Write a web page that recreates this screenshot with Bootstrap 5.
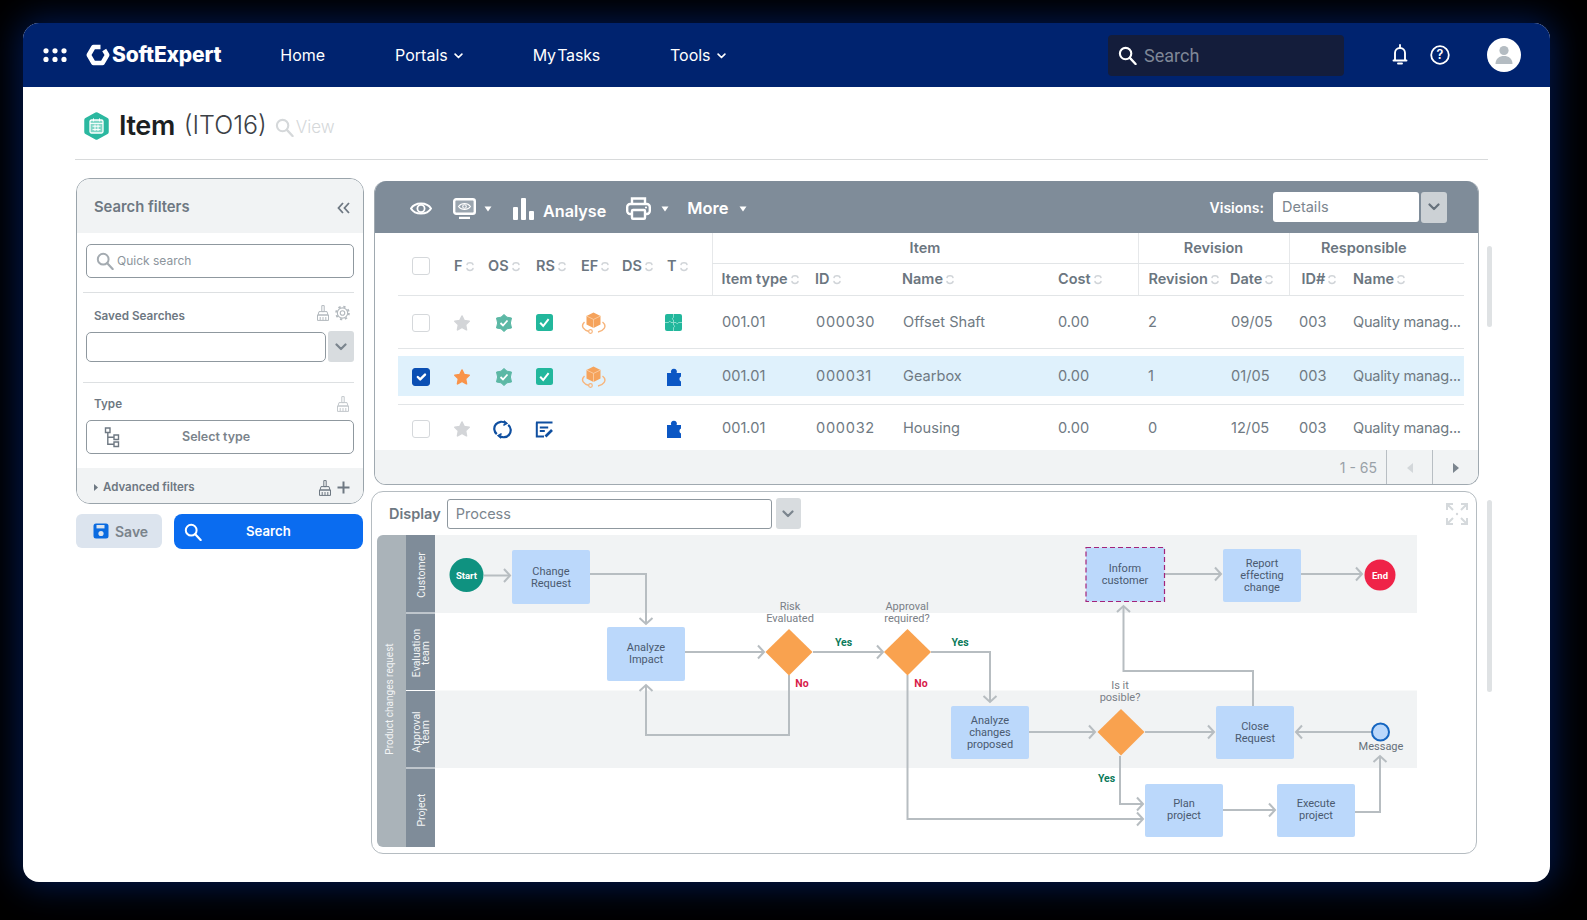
<!DOCTYPE html>
<html lang="en">
  <head>
    <meta charset="UTF-8" />
    <meta name="viewport" content="width=device-width, initial-scale=1.0" />
    <title>SoftExpert Item</title>
    <link href="https://cdn.jsdelivr.net/npm/bootstrap@5.3.0/dist/css/bootstrap.min.css" rel="stylesheet" />
    <style>
      html, body { height: 100%; }
      body { background: #000; font-family: "Inter", "Liberation Sans", sans-serif; color: #6e7882; overflow: hidden; }
      .app-window { width: 1527px; height: 859px; margin: 23px 0 0 23px; border-radius: 16px; background: #fff; overflow: hidden; box-shadow: 0 0 34px 4px #00184f; }

      /* top bar */
      .top-bar { height: 64px; background: #00236f; padding: 0 29px 0 20px; color: #fff; }
      .brand-wrap { margin-left: 19px; }
      .brand-name { font-size: 21px; font-weight: 800; letter-spacing: -.2px; color: #fff; margin-left: 2px; }
      .top-links { gap: 70px; margin-left: 59px; font-size: 16px; }
      .top-links a { color: #fff; text-decoration: none; }
      .tight-words { word-spacing: -3px; letter-spacing: -.2px; }
      .nav-chev { margin-left: 6px; vertical-align: 2px; }
      .top-search { width: 236px; height: 41px; background: #141d3b; border-radius: 4px; padding-left: 10px; gap: 7px; color: #7f8797; font-size: 18px; font-family: "Roboto", sans-serif; margin-right: 48px; }
      .help-ic { margin-left: 22px; }
      .avatar { width: 34px; height: 34px; border-radius: 50%; background: #fff; margin-left: 37px; }

      /* page */
      .page-body { padding: 0 62px 0 52px; }
      .title-row { height: 73px; border-bottom: 1px solid #d8dadb; padding: 6px 0 0 9px; }
      .title-row h1 { font-size: 27px; font-weight: 600; color: #1c1f22; margin: 0 0 0 10px; letter-spacing: -.4px; }
      .title-code { font-size: 25px; font-weight: 300; color: #3c4146; margin-left: 9px; }
      .title-view-ic { color: #d5d8da; margin: 3px 0 0 8px; }
      .title-view { font-size: 17px; color: #d5d8da; margin: 4px 0 0 2px; font-weight: 300; }
      .content-row { margin-top: 18px; }

      /* search filters */
      .filter-col { width: 288px; margin-left: 1px; margin-right: 7px; }
      .filter-panel { height: 326px; border: 1px solid #9aa4ab; border-radius: 14px; overflow: hidden; background: #fff; }
      .filter-head { height: 54px; background: #f1f3f4; padding: 3px 13px 0 17px; font-size: 14.8px; font-weight: 600; }
      .filter-body { padding: 11px 9px 0; height: 235px; }
      .box-field { height: 34px; border: 1px solid #8f989f; border-radius: 5px; color: #8c959c; font-size: 12px; padding: 0 0 0 9px; }
      .quick-field { gap: 3px; }
      .filter-sep { border-top: 1px solid #dde0e2; margin-left: -3px; }
      .quick-sep { margin-top: 14px; }
      .filter-label { font-size: 11.7px; font-weight: 600; padding: 0 4px 0 8px; }
      .saved-head { height: 38px; padding-top: 12px; }
      .saved-head > span:first-child { margin-top: 3px; }
      .broom-pale { color: #b3b9be; gap: 5px; }
      .saved-field { height: 30px; width: 240px; }
      .chev-btn { width: 26px; height: 31px; background: #d8dcdf; border-radius: 3px; color: #7b858e; }
      .saved-row { gap: 2px; margin-bottom: 20px; }
      .type-head { height: 37px; padding-top: 13px; }
      .broom-paler { color: #c3c8cc; }
      .type-field { font-weight: 600; color: #7a838b; font-size: 12.5px; padding-left: 17px; }
      .type-field span { margin-left: 62px; }
      .filter-foot { height: 35px; background: #f1f3f4; padding: 4px 13px 0 17px; font-size: 11.5px; font-weight: 600; }
      .adv-text { margin-left: 5px; }
      .adv-plus { margin-left: 5px; }
      .broom-dark { color: #6e7882; }
      .filter-actions { margin-top: 10px; gap: 12px; }
      .save-btn { width: 86px; height: 34px; background: #dce4ee; border-radius: 6px; padding: 0 0 0 17px; gap: 6px; font-size: 14px; font-weight: 600; color: #7a838b; }
      .run-btn { width: 189px; height: 35px; background: #0a6cf0; border-radius: 8px; padding: 0 0 0 10px; font-size: 13.2px; font-weight: 600; color: #fff; }
      .run-btn span { margin-left: 44px; }

      /* results panel */
      .main-col { width: 1121px; }
      .result-panel { width: 1106px; height: 304px; margin: 3px 0 0 3px; border: 1px solid #a0a9b0; border-top: 0; border-radius: 12px; overflow: hidden; background: #fff; }
      .tool-strip { height: 52px; background: #7f8c99; margin: 0 -1px; padding: 3px 32px 0 0; color: #fff; }
      .tb-eye { margin-left: 36px; }
      .tb-monitor { margin-left: 21px; }
      .tb-caret { margin-left: 8px; color: #fff; }
      .tb-bars { margin-left: 21px; }
      .tb-analyse { margin: 6px 0 0 9px; font-size: 16.2px; font-weight: 600; }
      .tb-print { margin-left: 20px; }
      .tb-caret2 { margin-left: 10px; color: #fff; }
      .tb-more { margin-left: 18px; font-size: 16.5px; font-weight: 600; }
      .vision-label { font-size: 14px; font-weight: 600; margin-right: 9px; margin-bottom: 3px; }
      .vision-field { width: 146px; height: 30px; background: #fff; border-radius: 3px; color: #7b858e; font-size: 14.5px; padding-left: 9px; margin-bottom: 3px; }
      .vision-btn { width: 26px; height: 31px; background: #ccd1d5; border-radius: 3px; margin: 0 0 3px 2px; color: #66717b; }
      .table-wrap { height: 217px; padding-left: 23px; }
      .data-table.table { width: 1066px; table-layout: fixed; margin: 0; font-size: 14.6px; color: #6f7a83; border-color: #e2e5e7; }
      .data-table.table > * > tr > * { padding: 0; vertical-align: middle; background: transparent; color: inherit; box-shadow: none; border-bottom: 1px solid #e2e5e7; }
      .data-table.table > thead > tr > th { font-size: 14.5px; font-weight: 600; color: #6b7680; white-space: nowrap; }
      .data-table .head-top { height: 30px; }
      .data-table .head-sub { height: 32px; }
      .data-table .row-a { height: 53px; }
      .data-table .row-b { height: 56px; background: linear-gradient(#dff1fc, #dff1fc) center / 100% 40px no-repeat; }
      .data-table .row-c { height: 46px; }
      .data-table.table > tbody > tr:last-child > td { border-bottom: 0; }
      .data-table.table > tbody > .row-a > * { padding-top: 2px; }
      .data-table.table > tbody > .row-b > * { padding-top: 1px; }
      .data-table.table > tbody > .row-c > * { padding-top: 4px; }
      .data-table.table > * > tr > .pad-14 { padding-left: 14px; }
      .data-table.table > * > tr > .pad-12 { padding-left: 12px; }
      .data-table.table > * > tr > .pad-10 { padding-left: 10px; }
      .data-table.table > * > tr > .pad-9 { padding-left: 9px; }
      .data-table.table > * > tr > .pad-8 { padding-left: 8px; }
      .data-table.table > * > tr > .pad-7 { padding-left: 7px; }
      .data-table.table > * > tr > .pad-6 { padding-left: 6px; }
      .data-table.table > * > tr > .pad-5 { padding-left: 5px; }
      .data-table.table > * > tr > .pad-4 { padding-left: 4px; }
      .data-table.table > thead > tr > .low-head { padding-top: 4px; }
      .data-table.table > thead > tr > .group-start { border-left: 1px solid #e6e8ea; }
      .data-table.table > thead > tr > .resp-head { padding-right: 26px; }
      .wide-num { letter-spacing: .7px; }
      .tight-name { letter-spacing: -.25px; }
      .data-table svg { display: block; }
      .data-table th svg { display: inline-block; margin-left: 3px; vertical-align: -2px; }
      .row-check.form-check-input { width: 18px; height: 18px; margin: 0; display: block; border: 1.5px solid #d5d8db; border-radius: 3px; }
      .row-check.form-check-input:checked { background-color: #0b4fb3; border-color: #0b4fb3; }
      .pager-bar { height: 35px; background: #f1f3f4; font-size: 14px; color: #99a1a8; }
      .pager-btn { width: 46px; height: 100%; border-left: 1px solid #b8bec3; }
      .pager-count { margin-right: 9px; }
      .scroll-thumb { width: 5px; background: #dfe2e4; border-radius: 3px; }
      .thumb-top { height: 81px; margin: 68px 0 0 8px; }
      .thumb-bottom { height: 192px; margin: 9px 0 0 10px; }

      /* process panel */
      .process-row { margin-top: 6px; }
      .process-panel { width: 1107px; height: 363px; border: 1px solid #b5bcc1; border-radius: 12px; background: #fff; padding: 6px 5px 0; }
      .display-label { font-size: 14.5px; font-weight: 600; margin: 0 6px 0 12px; }
      .process-field { width: 325px; height: 30px; border: 1px solid #8f989f; border-radius: 3px; color: #7b858e; font-size: 14.5px; padding-left: 8px; }
      .process-btn { margin-left: 4px; width: 25px; }
      .expand-btn { margin: 0 3px 0 auto; }
      .flow-canvas { display: block; margin-top: 6px; font-family: "Roboto", sans-serif; }
      .flow-node { fill: #bbd8fb; }
      .flow-line { fill: none; stroke: #b7bdc1; stroke-width: 2; }
      .flow-text { font-size: 11px; fill: #4a5a70; text-anchor: middle; }
      .flow-note { font-size: 11px; fill: #7a8087; text-anchor: middle; }
      .flow-msg { fill: #66707a; }
      .flow-yes { font-size: 10.5px; font-weight: 700; fill: #0b7a5a; text-anchor: middle; }
      .flow-no { font-size: 10.5px; font-weight: 700; fill: #d81b4a; text-anchor: middle; }
      .flow-lane { font-size: 10.5px; fill: #f2f4f5; text-anchor: middle; }
      .flow-lane-big { font-size: 10px; }
      .flow-badge { font-size: 9.5px; font-weight: 700; fill: #fff; text-anchor: middle; }
    </style>
  </head>
  <body>
    <!-- shared icons -->
    <svg class="d-none">
      <symbol id="ic-sort" viewBox="0 0 8 13"><path d="M1 4.5C1.5 2 6.5 2 7 4.5M1 8.5C1.5 11 6.5 11 7 8.5" fill="none" stroke="#d0d4d8" stroke-width="1.5" stroke-linecap="round" /></symbol>
      <symbol id="ic-chev" viewBox="0 0 12 8"><path d="M1.5 1.5 6 6l4.5-4.5" fill="none" stroke="currentColor" stroke-width="2.2" stroke-linecap="round" stroke-linejoin="round" /></symbol>
      <symbol id="ic-search" viewBox="0 0 20 20"><circle cx="8" cy="8" r="6" fill="none" stroke="currentColor" stroke-width="2.2" /><path d="M12.5 12.5 18.5 19" stroke="currentColor" stroke-width="2.4" stroke-linecap="round" /></symbol>
      <symbol id="ic-broom" viewBox="0 0 14 16"><path d="M5.8 .6h2.4v6H5.8zM3 6.6h8l1 3.4H2zM1.5 10h11v5.4h-11zM4.2 12v3.4M7 12v3.4M9.8 12v3.4" fill="none" stroke="currentColor" stroke-width="1" /></symbol>
      <symbol id="ic-star" viewBox="0 0 18 18"><polygon points="9,2 11.2,6.6 16.2,7.3 12.6,10.8 13.5,15.8 9,13.4 4.5,15.8 5.4,10.8 1.8,7.3 6.8,6.6" fill="currentColor" stroke="currentColor" stroke-width="1.6" stroke-linejoin="round" /></symbol>
      <symbol id="ic-badge" viewBox="0 0 16 18"><polygon points="8,.5 11,3.2 15.5,4 14.4,9 15.5,14 11,14.8 8,17.5 5,14.8 .5,14 1.6,9 .5,4 5,3.2" fill="#5cb8a5" stroke="#5cb8a5" stroke-linejoin="round" /><path d="M4.5 9l2.5 2.5 4.5-5" fill="none" stroke="#fff" stroke-width="1.8" /></symbol>
      <symbol id="ic-tick" viewBox="0 0 17 17"><rect width="17" height="17" rx="2.5" fill="#22b79c" /><path d="M4.2 8.8l3 3.2 5.4-6.8" fill="none" stroke="#fff" stroke-width="2" /></symbol>
      <symbol id="ic-cube" viewBox="0 0 25 22"><polygon points="12.5,.5 19.5,4 19.5,12.5 12.5,16 5.5,12.5 5.5,4" fill="#f5a35c" /><path d="M5.5 4l7 3.4L19.5 4M12.5 7.4V16" fill="none" stroke="#fbd3ad" stroke-width=".8" /><path d="M3.5 10C-1 14.5 3 18 8 19.5M17 20C22 19 27 14.5 21.5 10" fill="none" stroke="#f7b57c" stroke-width="1.4" /><circle cx="9.5" cy="19.5" r="1.8" fill="none" stroke="#f7b57c" stroke-width="1.2" /></symbol>
      <symbol id="ic-puzzle-teal" viewBox="0 0 17 17"><rect width="17" height="17" rx="2" fill="#22b79c" /><path d="M8.5 0v3.5c-1.5.5-1.5 2 0 2.5v2.5M8.5 8.5H6c-.5-1.5-2-1.5-2.5 0H0M8.5 8.5h2.5c.5 1.5 2 1.5 2.5 0H17M8.5 8.5V11c1.5.5 1.5 2 0 2.5V17" fill="none" stroke="#a5e6d9" stroke-width=".8" /></symbol>
      <symbol id="ic-puzzle-blue" viewBox="0 0 16 18"><path d="M1 5h4.2a3 3 0 1 1 5.4 0H15v3.6a2.6 2.6 0 0 0 0 4.8V18H1z" fill="#0b57c4" /></symbol>
      <symbol id="ic-refresh" viewBox="0 0 19 19"><path d="M3.8 14.2A7 7 0 0 1 12.8 3.4M15.2 4.8A7 7 0 0 1 6.2 15.6" fill="none" stroke="#0f4fa0" stroke-width="2.2" /><path d="M10.8 .8l3 2.6-3.4 2M8.2 18.2l-3-2.6 3.4-2" fill="none" stroke="#0f4fa0" stroke-width="1.6" /></symbol>
      <symbol id="ic-edit" viewBox="0 0 19 17"><path d="M1 1.4h16.5M1.8 1.4V15.6H9M4.8 6.4h8.4M4.8 10h5" fill="none" stroke="#0f4fa0" stroke-width="2" /><path d="M10.5 15.5l6.5-6.5" stroke="#0f4fa0" stroke-width="2.6" /></symbol>
      <symbol id="ic-marker" viewBox="0 0 8 6"><path d="M.5 .5h7L4 5.5z" fill="currentColor" /></symbol>
    </svg>

    <div class="app-window">
      <!-- top bar -->
      <nav class="navbar navbar-expand top-bar d-flex flex-nowrap align-items-center">
        <svg width="24" height="14" viewBox="0 0 24 14" fill="#fff">
          <circle cx="3" cy="2.8" r="2.6" /><circle cx="12" cy="2.8" r="2.6" /><circle cx="21" cy="2.8" r="2.6" />
          <circle cx="3" cy="11.4" r="2.6" /><circle cx="12" cy="11.4" r="2.6" /><circle cx="21" cy="11.4" r="2.6" />
        </svg>
        <div class="d-flex align-items-center brand-wrap">
          <svg width="24" height="22" viewBox="0 0 24 22"><path d="M14.5 3H7.5L2.8 11l4.7 8h9l4.7-8-3-5" fill="none" stroke="#fff" stroke-width="4.6" stroke-linejoin="round" /></svg>
          <span class="brand-name">SoftExpert</span>
        </div>
        <div class="d-flex align-items-center top-links">
          <a href="#">Home</a>
          <a href="#">Portals<svg class="nav-chev" width="9" height="6"><use href="#ic-chev" /></svg></a>
          <a href="#" class="tight-words">My Tasks</a>
          <a href="#">Tools<svg class="nav-chev" width="9" height="6"><use href="#ic-chev" /></svg></a>
        </div>
        <div class="d-flex align-items-center ms-auto">
          <div class="d-flex align-items-center top-search">
            <svg width="19" height="19" class="text-white"><use href="#ic-search" /></svg>
            <span>Search</span>
          </div>
          <svg width="16" height="22" viewBox="0 0 16 22"><path d="M8 1v2M3 16V9a5 5 0 0 1 10 0v7M1.5 16.5h13M6 19.5h4" fill="none" stroke="#fff" stroke-width="1.9" stroke-linecap="round" /></svg>
          <svg class="help-ic" width="20" height="20" viewBox="0 0 20 20"><circle cx="10" cy="10" r="8.8" fill="none" stroke="#fff" stroke-width="1.8" /><text x="10" y="14.4" text-anchor="middle" font-size="12.5" font-weight="600" fill="#fff">?</text></svg>
          <div class="avatar d-flex align-items-center justify-content-center">
            <svg width="20" height="20" viewBox="0 0 20 20" fill="#b4bcc2"><circle cx="10" cy="5.5" r="4.6" /><path d="M1.5 19c0-5.5 4-8 8.5-8s8.5 2.5 8.5 8z" /></svg>
          </div>
        </div>
      </nav>

      <div class="page-body">
        <!-- title -->
        <div class="title-row d-flex align-items-center">
          <svg width="25" height="28" viewBox="0 0 25 28">
            <polygon points="12.5,2.5 22.5,8 22.5,20 12.5,25.5 2.5,20 2.5,8" fill="#2bb8a0" stroke="#2bb8a0" stroke-width="4.5" stroke-linejoin="round" />
            <rect x="6" y="8" width="13" height="13" rx="1.5" fill="#7fd6c6" stroke="#fff" stroke-width="1.3" />
            <path d="M6 11.4h13M9.5 6.4v3M15.5 6.4v3M8.5 14.2h8M8.5 17.6h8M11 12.5v6.5M14 12.5v6.5" fill="none" stroke="#fff" stroke-width="1" />
          </svg>
          <h1>Item</h1>
          <span class="title-code">(ITO16)</span>
          <svg width="19" height="19" class="title-view-ic"><use href="#ic-search" /></svg>
          <span class="title-view">View</span>
        </div>

        <div class="content-row d-flex align-items-start">
          <!-- search filters -->
          <div class="filter-col">
            <div class="filter-panel">
              <div class="filter-head d-flex align-items-center justify-content-between">
                <span>Search filters</span>
                <svg width="13" height="12" viewBox="0 0 13 12"><path d="M6 1 1.5 6 6 11M12 1 7.5 6 12 11" fill="none" stroke="#6e7882" stroke-width="1.8" /></svg>
              </div>
              <div class="filter-body">
                <div class="box-field quick-field d-flex align-items-center">
                  <svg width="18" height="18" style="color: #a4abb1"><use href="#ic-search" /></svg>
                  <span>Quick search</span>
                </div>
                <div class="filter-sep quick-sep"></div>
                <div class="filter-label saved-head d-flex justify-content-between">
                  <span>Saved Searches</span>
                  <span class="d-flex broom-pale">
                    <svg width="14" height="16"><use href="#ic-broom" /></svg>
                    <svg width="15" height="16" viewBox="0 0 16 16"><circle cx="8" cy="8" r="5.5" fill="none" stroke="currentColor" stroke-width="1.2" /><circle cx="8" cy="8" r="6.8" fill="none" stroke="currentColor" stroke-width="2" stroke-dasharray="2.4 2.95" /><circle cx="8" cy="8" r="2.4" fill="none" stroke="currentColor" stroke-width="1.2" /></svg>
                  </span>
                </div>
                <div class="d-flex align-items-center saved-row">
                  <div class="box-field saved-field"></div>
                  <div class="chev-btn d-flex align-items-center justify-content-center"><svg width="12" height="8"><use href="#ic-chev" /></svg></div>
                </div>
                <div class="filter-sep"></div>
                <div class="filter-label type-head d-flex justify-content-between">
                  <span>Type</span>
                  <svg width="14" height="16" class="broom-paler"><use href="#ic-broom" /></svg>
                </div>
                <div class="box-field type-field d-flex align-items-center">
                  <svg width="16" height="21" viewBox="0 0 16 21"><path d="M1.5 1h4.5v4.5H1.5zM10 8h4.5v4.5H10zM10 15h4.5v4.5H10zM3.8 5.5V17.2H10M3.8 10.2H10" fill="none" stroke="#6e7882" stroke-width="1.4" /></svg>
                  <span>Select type</span>
                </div>
              </div>
              <div class="filter-foot d-flex align-items-center">
                <svg width="4" height="7" viewBox="0 0 4 7"><path d="M0 0l4 3.5L0 7z" fill="#6e7882" /></svg>
                <span class="adv-text">Advanced filters</span>
                <svg class="ms-auto broom-dark" width="14" height="16"><use href="#ic-broom" /></svg>
                <svg class="adv-plus" width="13" height="13" viewBox="0 0 13 13"><path d="M6.5 .5v12M.5 6.5h12" stroke="#6e7882" stroke-width="2" /></svg>
              </div>
            </div>
            <div class="d-flex filter-actions">
              <div class="save-btn d-flex align-items-center">
                <svg width="16" height="16" viewBox="0 0 16 16"><rect x=".5" y=".5" width="15" height="15" rx="2.5" fill="#0b6be0" /><rect x="3.5" y="2" width="8" height="3.4" fill="#dce4ee" /><circle cx="8" cy="10.5" r="2.6" fill="#dce4ee" /></svg>
                <span>Save</span>
              </div>
              <div class="run-btn d-flex align-items-center">
                <svg width="18" height="18" class="text-white"><use href="#ic-search" /></svg>
                <span>Search</span>
              </div>
            </div>
          </div>

          <div class="main-col">
            <!-- results -->
            <div class="d-flex align-items-start">
              <div class="result-panel">
                <div class="tool-strip d-flex align-items-center">
                  <svg class="tb-eye" width="22" height="15" viewBox="0 0 22 15"><path d="M1 7.5C5 .8 17 .8 21 7.5 17 14.2 5 14.2 1 7.5z" fill="none" stroke="#fff" stroke-width="2" /><circle cx="11" cy="7.5" r="3.6" fill="none" stroke="#fff" stroke-width="1.8" /></svg>
                  <svg class="tb-monitor" width="23" height="21" viewBox="0 0 23 21"><rect x="1.2" y="1.2" width="20.6" height="14.6" rx="2" fill="#9aa5af" stroke="#fff" stroke-width="2.4" /><path d="M6 20h11" stroke="#fff" stroke-width="2.4" /><path d="M5.5 8.5c3-4 9-4 12 0-3 4-9 4-12 0z" fill="none" stroke="#fff" stroke-width="1.1" /><circle cx="11.5" cy="8.5" r="1.8" fill="none" stroke="#fff" stroke-width="1.1" /></svg>
                  <svg class="tb-caret" width="8" height="6"><use href="#ic-marker" /></svg>
                  <svg class="tb-bars" width="21" height="22" viewBox="0 0 21 22" fill="#fff"><rect y="9" width="5" height="13" rx="1" /><rect x="8" width="5" height="22" rx="1" /><rect x="16" y="13" width="5" height="9" rx="1" /></svg>
                  <span class="tb-analyse">Analyse</span>
                  <svg class="tb-print" width="25" height="23" viewBox="0 0 25 23"><path d="M6 7V1.5h13V7" fill="none" stroke="#fff" stroke-width="2.4" /><rect x="1.2" y="7" width="22.6" height="10" rx="3" fill="none" stroke="#fff" stroke-width="2.4" /><rect x="6" y="13" width="13" height="8.8" rx="1" fill="#7f8c99" stroke="#fff" stroke-width="2.4" /><circle cx="20" cy="10.5" r="1.1" fill="#fff" /></svg>
                  <svg class="tb-caret2" width="8" height="6"><use href="#ic-marker" /></svg>
                  <span class="tb-more">More</span>
                  <svg class="tb-caret2" width="8" height="6"><use href="#ic-marker" /></svg>
                  <span class="vision-label ms-auto">Visions:</span>
                  <div class="vision-field d-flex align-items-center">Details</div>
                  <div class="vision-btn d-flex align-items-center justify-content-center"><svg width="12" height="8"><use href="#ic-chev" /></svg></div>
                </div>
                <div class="table-wrap">
                  <table class="table data-table">
                    <colgroup>
                      <col style="width: 46px" /><col style="width: 40px" /><col style="width: 46px" /><col style="width: 43px" /><col style="width: 43px" /><col style="width: 44px" /><col style="width: 52px" />
                      <col style="width: 94px" /><col style="width: 87px" /><col style="width: 156px" /><col style="width: 89px" />
                      <col style="width: 83px" /><col style="width: 68px" /><col style="width: 55px" /><col style="width: 120px" />
                    </colgroup>
                    <thead>
                      <tr class="head-top">
                        <th rowspan="2" class="pad-14 low-head"><input class="form-check-input row-check" type="checkbox" aria-label="Select all" /></th>
                        <th rowspan="2" class="pad-10 low-head">F<svg width="8" height="13"><use href="#ic-sort" /></svg></th>
                        <th rowspan="2" class="pad-4 low-head">OS<svg width="8" height="13"><use href="#ic-sort" /></svg></th>
                        <th rowspan="2" class="pad-6 low-head">RS<svg width="8" height="13"><use href="#ic-sort" /></svg></th>
                        <th rowspan="2" class="pad-8 low-head">EF<svg width="8" height="13"><use href="#ic-sort" /></svg></th>
                        <th rowspan="2" class="pad-6 low-head">DS<svg width="8" height="13"><use href="#ic-sort" /></svg></th>
                        <th rowspan="2" class="pad-7 low-head">T<svg width="8" height="13"><use href="#ic-sort" /></svg></th>
                        <th colspan="4" class="text-center group-start">Item</th>
                        <th colspan="2" class="text-center group-start">Revision</th>
                        <th colspan="2" class="text-center group-start resp-head">Responsible</th>
                      </tr>
                      <tr class="head-sub">
                        <th class="pad-9 group-start">Item type<svg width="8" height="13"><use href="#ic-sort" /></svg></th>
                        <th class="pad-9">ID<svg width="8" height="13"><use href="#ic-sort" /></svg></th>
                        <th class="pad-9">Name<svg width="8" height="13"><use href="#ic-sort" /></svg></th>
                        <th class="pad-9">Cost<svg width="8" height="13"><use href="#ic-sort" /></svg></th>
                        <th class="pad-10 group-start">Revision<svg width="8" height="13"><use href="#ic-sort" /></svg></th>
                        <th class="pad-9">Date<svg width="8" height="13"><use href="#ic-sort" /></svg></th>
                        <th class="pad-12 group-start">ID#<svg width="8" height="13"><use href="#ic-sort" /></svg></th>
                        <th class="pad-9">Name<svg width="8" height="13"><use href="#ic-sort" /></svg></th>
                      </tr>
                    </thead>
                    <tbody>
                      <tr class="row-a">
                        <td class="pad-14"><input class="form-check-input row-check" type="checkbox" aria-label="Select row" /></td>
                        <td class="pad-9"><svg width="18" height="18" style="color: #d3d5d8"><use href="#ic-star" /></svg></td>
                        <td class="pad-12"><svg width="16" height="18"><use href="#ic-badge" /></svg></td>
                        <td class="pad-6"><svg width="17" height="17"><use href="#ic-tick" /></svg></td>
                        <td class="pad-8"><svg width="25" height="22"><use href="#ic-cube" /></svg></td>
                        <td></td>
                        <td class="pad-5"><svg width="17" height="17"><use href="#ic-puzzle-teal" /></svg></td>
                        <td class="pad-10">001.01</td><td class="pad-10 wide-num">000030</td><td class="pad-10">Offset Shaft</td><td class="pad-9">0.00</td>
                        <td class="pad-10">2</td><td class="pad-10">09/05</td><td class="pad-10">003</td><td class="pad-9 tight-name">Quality manag...</td>
                      </tr>
                      <tr class="row-b">
                        <td class="pad-14"><input class="form-check-input row-check" type="checkbox" checked aria-label="Select row" /></td>
                        <td class="pad-9"><svg width="18" height="18" style="color: #f9944a"><use href="#ic-star" /></svg></td>
                        <td class="pad-12"><svg width="16" height="18"><use href="#ic-badge" /></svg></td>
                        <td class="pad-6"><svg width="17" height="17"><use href="#ic-tick" /></svg></td>
                        <td class="pad-8"><svg width="25" height="22"><use href="#ic-cube" /></svg></td>
                        <td></td>
                        <td class="pad-6"><svg width="16" height="18"><use href="#ic-puzzle-blue" /></svg></td>
                        <td class="pad-10">001.01</td><td class="pad-10 wide-num">000031</td><td class="pad-10">Gearbox</td><td class="pad-9">0.00</td>
                        <td class="pad-10">1</td><td class="pad-10">01/05</td><td class="pad-10">003</td><td class="pad-9 tight-name">Quality manag...</td>
                      </tr>
                      <tr class="row-c">
                        <td class="pad-14"><input class="form-check-input row-check" type="checkbox" aria-label="Select row" /></td>
                        <td class="pad-9"><svg width="18" height="18" style="color: #d3d5d8"><use href="#ic-star" /></svg></td>
                        <td class="pad-9"><svg width="19" height="19"><use href="#ic-refresh" /></svg></td>
                        <td class="pad-5"><svg width="19" height="17"><use href="#ic-edit" /></svg></td>
                        <td></td>
                        <td></td>
                        <td class="pad-6"><svg width="16" height="18"><use href="#ic-puzzle-blue" /></svg></td>
                        <td class="pad-10">001.01</td><td class="pad-10 wide-num">000032</td><td class="pad-10">Housing</td><td class="pad-9">0.00</td>
                        <td class="pad-10">0</td><td class="pad-10">12/05</td><td class="pad-10">003</td><td class="pad-9 tight-name">Quality manag...</td>
                      </tr>
                    </tbody>
                  </table>
                </div>
                <div class="pager-bar d-flex align-items-center justify-content-end">
                  <span class="pager-count">1 - 65</span>
                  <div class="pager-btn d-flex align-items-center justify-content-center"><svg width="6" height="10" viewBox="0 0 6 10"><path d="M6 0v10L0 5z" fill="#d3d7da" /></svg></div>
                  <div class="pager-btn d-flex align-items-center justify-content-center"><svg width="6" height="10" viewBox="0 0 6 10"><path d="M0 0v10l6-5z" fill="#7b858e" /></svg></div>
                </div>
              </div>
              <div class="scroll-thumb thumb-top"></div>
            </div>

            <!-- process -->
            <div class="d-flex align-items-start process-row">
              <div class="process-panel">
                <div class="d-flex align-items-center">
                  <span class="display-label">Display</span>
                  <div class="process-field d-flex align-items-center">Process</div>
                  <div class="chev-btn process-btn d-flex align-items-center justify-content-center"><svg width="12" height="8"><use href="#ic-chev" /></svg></div>
                  <svg class="expand-btn" width="22" height="22" viewBox="0 0 22 22" fill="none" stroke="#d5d9dc" stroke-width="2"><path d="M1 7V1h6M2 2l5 5M15 1h6v6M20 2l-5 5M1 15v6h6M2 20l5-5M21 15v6h-6M20 20l-5-5" /><circle cx="11" cy="11" r="1.2" fill="#d5d9dc" stroke="none" /></svg>
                </div>
                <svg class="flow-canvas" width="1040" height="312" viewBox="377 535 1040 312">
                  <defs>
                    <marker id="flow-arrow" markerUnits="userSpaceOnUse" markerWidth="12" markerHeight="16" refX="9" refY="8" orient="auto"><path d="M3 1.5 9 8l-6 6.5" fill="none" stroke="#b7bdc1" stroke-width="2" /></marker>
                  </defs>
                  <!-- lanes -->
                  <rect x="435" y="535" width="982" height="78" fill="#f1f3f4" />
                  <rect x="435" y="690.5" width="982" height="77.5" fill="#f1f3f4" />
                  <path d="M406 535h-23a6 6 0 0 0-6 6v300a6 6 0 0 0 6 6h23z" fill="#aab3b9" />
                  <rect x="406" y="535" width="29" height="312" fill="#7f8c99" />
                  <path d="M406 613h29M406 690.5h29M406 768h29" stroke="#fff" stroke-width="1" />
                  <text class="flow-lane flow-lane-big" transform="translate(393 699) rotate(-90)">Product changes request</text>
                  <text class="flow-lane" transform="translate(424.5 575) rotate(-90)">Customer</text>
                  <text class="flow-lane" transform="translate(420 653) rotate(-90)">Evaluation</text>
                  <text class="flow-lane" transform="translate(429 653) rotate(-90)">team</text>
                  <text class="flow-lane" transform="translate(420 732) rotate(-90)">Approval</text>
                  <text class="flow-lane" transform="translate(429 732) rotate(-90)">team</text>
                  <text class="flow-lane" transform="translate(424.5 810) rotate(-90)">Project</text>

                  <!-- connectors -->
                  <g class="flow-line">
                    <path marker-end="url(#flow-arrow)" d="M484 575.5H510" />
                    <path marker-end="url(#flow-arrow)" d="M590 574H646V624" />
                    <path marker-end="url(#flow-arrow)" d="M685 652H764" />
                    <path marker-end="url(#flow-arrow)" d="M813 652H883" />
                    <path marker-end="url(#flow-arrow)" d="M789 675V735H646V685" />
                    <path marker-end="url(#flow-arrow)" d="M907.5 675V819H1143" />
                    <path marker-end="url(#flow-arrow)" d="M931 652H990V702" />
                    <path marker-end="url(#flow-arrow)" d="M1029 732H1095" />
                    <path marker-end="url(#flow-arrow)" d="M1145 732H1214" />
                    <path marker-end="url(#flow-arrow)" d="M1253 706V671H1123.5V606" />
                    <path marker-end="url(#flow-arrow)" d="M1165 574H1221" />
                    <path marker-end="url(#flow-arrow)" d="M1301 574H1362" />
                    <path marker-end="url(#flow-arrow)" d="M1372 732H1296" />
                    <path marker-end="url(#flow-arrow)" d="M1120 756V804H1143" />
                    <path marker-end="url(#flow-arrow)" d="M1223 810H1275" />
                    <path marker-end="url(#flow-arrow)" d="M1355 812H1380V756" />
                  </g>

                  <!-- nodes -->
                  <circle cx="466.5" cy="575" r="17" fill="#0f9280" />
                  <text class="flow-badge" x="466.5" y="578.5">Start</text>
                  <circle cx="1380" cy="575" r="15.5" fill="#ef2348" />
                  <text class="flow-badge" x="1380" y="578.5">End</text>

                  <rect class="flow-node" x="512" y="550" width="78" height="54" rx="2" />
                  <text class="flow-text" x="551" y="575">Change</text>
                  <text class="flow-text" x="551" y="587">Request</text>
                  <rect class="flow-node" x="607" y="627" width="78" height="54" rx="2" />
                  <text class="flow-text" x="646" y="651">Analyze</text>
                  <text class="flow-text" x="646" y="663">Impact</text>
                  <rect class="flow-node" x="951" y="706" width="78" height="53" rx="2" />
                  <text class="flow-text" x="990" y="724">Analyze</text>
                  <text class="flow-text" x="990" y="736">changes</text>
                  <text class="flow-text" x="990" y="748">proposed</text>
                  <rect class="flow-node" x="1216" y="706" width="78" height="53" rx="2" />
                  <text class="flow-text" x="1255" y="729.5">Close</text>
                  <text class="flow-text" x="1255" y="741.5">Request</text>
                  <rect class="flow-node" x="1086" y="547.5" width="78.5" height="54" stroke="#a3237a" stroke-width="1.2" stroke-dasharray="5 3" />
                  <text class="flow-text" x="1125" y="572">Inform</text>
                  <text class="flow-text" x="1125" y="584">customer</text>
                  <rect class="flow-node" x="1223" y="549" width="78" height="53" rx="2" />
                  <text class="flow-text" x="1262" y="567">Report</text>
                  <text class="flow-text" x="1262" y="579">effecting</text>
                  <text class="flow-text" x="1262" y="591">change</text>
                  <rect class="flow-node" x="1145" y="784" width="78" height="53" rx="2" />
                  <text class="flow-text" x="1184" y="806.5">Plan</text>
                  <text class="flow-text" x="1184" y="819">project</text>
                  <rect class="flow-node" x="1277" y="784" width="78" height="53" rx="2" />
                  <text class="flow-text" x="1316" y="806.5">Execute</text>
                  <text class="flow-text" x="1316" y="819">project</text>

                  <polygon points="789,629 812.5,652 789,675.5 765.5,652" fill="#f9a24f" />
                  <polygon points="907.5,629 931,652 907.5,675.5 884,652" fill="#f9a24f" />
                  <polygon points="1121,709 1144.5,732 1121,755.5 1097.5,732" fill="#f9a24f" />
                  <text class="flow-note" x="790" y="610">Risk</text>
                  <text class="flow-note" x="790" y="622">Evaluated</text>
                  <text class="flow-note" x="907" y="610">Approval</text>
                  <text class="flow-note" x="907" y="622">required?</text>
                  <text class="flow-note" x="1120" y="689">Is it</text>
                  <text class="flow-note" x="1120" y="701">posible?</text>
                  <text class="flow-yes" x="843.5" y="646">Yes</text>
                  <text class="flow-yes" x="960" y="646">Yes</text>
                  <text class="flow-yes" x="1106.5" y="782">Yes</text>
                  <text class="flow-no" x="802" y="687">No</text>
                  <text class="flow-no" x="921" y="687">No</text>

                  <circle cx="1380.5" cy="732" r="8.5" fill="#bbd8fb" stroke="#1565c0" stroke-width="2" />
                  <text class="flow-note flow-msg" x="1381" y="749.5">Message</text>
                </svg>
              </div>
              <div class="scroll-thumb thumb-bottom"></div>
            </div>
          </div>
        </div>
      </div>
    </div>
    <script src="https://cdn.jsdelivr.net/npm/bootstrap@5.3.0/dist/js/bootstrap.bundle.min.js"></script>
  </body>
</html>
